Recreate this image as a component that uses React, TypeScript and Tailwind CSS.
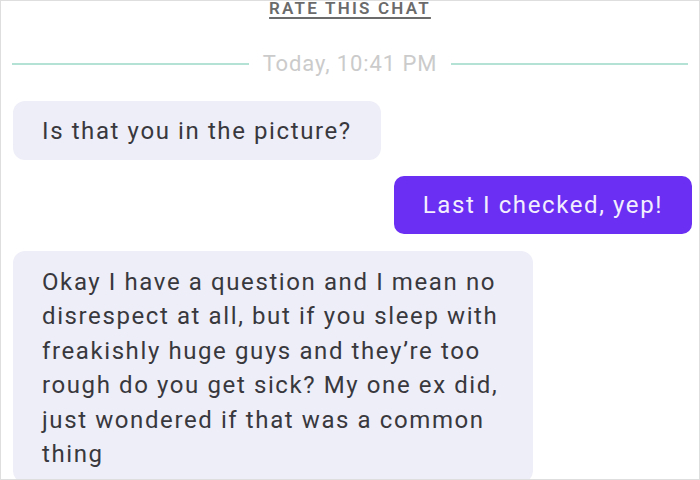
import React from 'react';

const font = { fontFamily: 'Roboto, "Noto Sans", sans-serif' };

function Bubble({ text, mine }: { text: string; mine?: boolean }) {
  return (
    <div className={mine ? 'flex justify-end' : 'flex justify-start'}>
      <div
        className={
          mine
            ? 'rounded-[10px] bg-[#6a2ff3] px-[29px] py-3 text-[24px] leading-[34px] tracking-[1.6px] text-[#f3eefe]'
            : 'rounded-[12px] bg-[#eeeef8] px-[29px] py-[12.5px] text-[24px] leading-[34px] tracking-[1.6px] text-[#38383d]'
        }
      >
        {text}
      </div>
    </div>
  );
}

export default function App() {
  return (
    <div className="h-[480px] w-[700px] overflow-hidden border border-[#dedede] bg-white" style={font}>
      <div className="flex h-[20px] items-start justify-center">
        <span className="-mt-[5px] text-[17px] font-semibold uppercase tracking-[2.2px] text-[#6b6b6b] underline decoration-[2px] underline-offset-[3px]">
          Rate this chat
        </span>
      </div>

      <div className="mt-[27px] flex h-[32px] items-center gap-[14px] px-[11px]">
        <div className="h-[2px] flex-1 bg-[#b4e2d5]" />
        <span className="text-[22px] leading-[32px] tracking-[0.9px] text-[#cbcbcb]">Today, 10:41 PM</span>
        <div className="h-[2px] flex-1 bg-[#b4e2d5]" />
      </div>

      <div className="mt-[21px] flex flex-col gap-4 pl-[12px] pr-[7px]">
        <Bubble text="Is that you in the picture?" />
        <Bubble text="Last I checked, yep!" mine />
        <div className="mt-px flex">
          <div className="w-[520px] rounded-[12px] bg-[#eeeef8] pl-[29px] pr-[20px] pt-[14px] pb-3 text-[24px] leading-[34.4px] tracking-[1.6px] text-[#38383d]">
            Okay I have a question and I mean no disrespect at all, but if you sleep with freakishly huge guys and they’re too
            rough do you get sick? My one ex did, just wondered if that was a common thing
          </div>
        </div>
      </div>
    </div>
  );
}
